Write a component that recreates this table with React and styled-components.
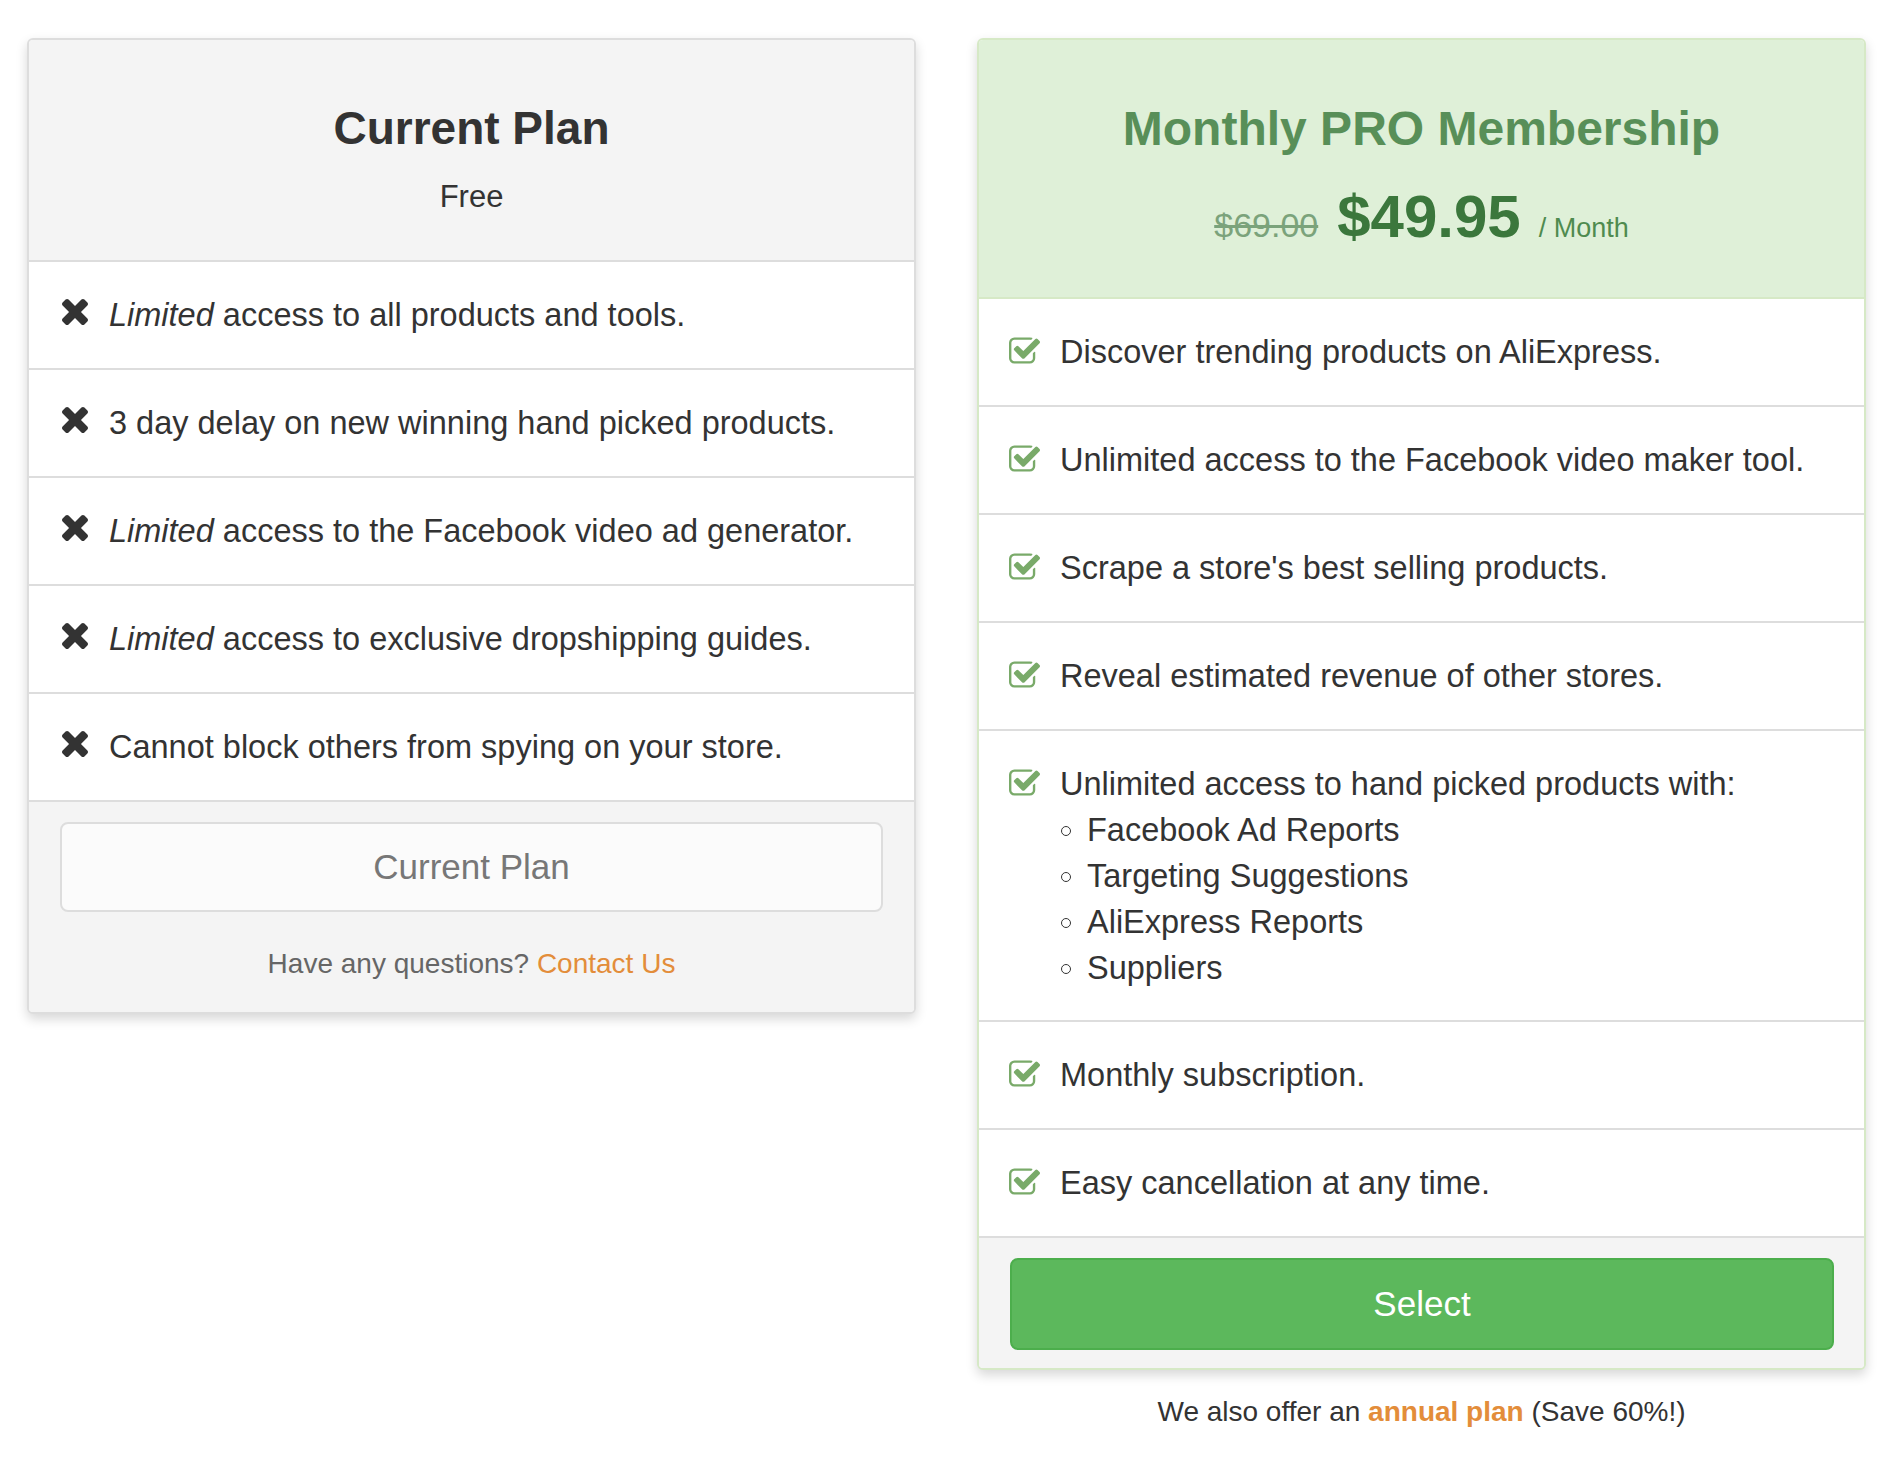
import React from "react";
import styled, { createGlobalStyle } from "styled-components";

const GlobalStyle = createGlobalStyle`
  body {
    margin: 0;
    background: #fff;
    color: #333;
    font-family: "Liberation Sans", Arial, Helvetica, sans-serif;
  }
`;

const Page = styled.div`
  display: grid;
  grid-template-columns: 1fr 1fr;
  column-gap: 61px;
  align-items: start;
  padding: 38px 30px 40px 27px;
`;

const Column = styled.div`
  display: flex;
  flex-direction: column;
`;

const Card = styled.div`
  border: 2px solid ${(p) => (p.$pro ? "#d6e9c6" : "#ddd")};
  border-radius: 6px;
  overflow: hidden;
  background: #fff;
  box-shadow: 0 5px 12px rgba(0, 0, 0, 0.16);
`;

const CardHeader = styled.div`
  background: ${(p) => (p.$pro ? "#dff0d8" : "#f4f4f4")};
  border-bottom: 2px solid ${(p) => (p.$pro ? "#d6e9c6" : "#ddd")};
  text-align: center;
  padding: ${(p) => (p.$pro ? "62px 20px 45px" : "62px 20px 43px")};
`;

const PlanTitle = styled.h2`
  margin: 0;
  font-size: ${(p) => (p.$pro ? 48 : 46)}px;
  line-height: ${(p) => (p.$pro ? 54 : 52)}px;
  font-weight: 700;
  color: ${(p) => (p.$pro ? "#588f58" : "#333")};
`;

const PlanSubtitle = styled.div`
  margin-top: 23px;
  font-size: 31px;
  line-height: 40px;
  color: #333;
`;

const PriceRow = styled.div`
  margin-top: 26px;
  line-height: 70px;
  height: 70px;
  color: #3c763d;
`;

const OldPrice = styled.span`
  font-size: 34px;
  color: #7ba37b;
  text-decoration: line-through;
  margin-right: 19px;
`;

const Price = styled.span`
  font-size: 60px;
  font-weight: 700;
  color: #3b773c;
  margin-right: 18px;
`;

const Period = styled.span`
  font-size: 27px;
  color: #4f8b4f;
`;

const FeatureList = styled.ul`
  list-style: none;
  margin: 0;
  padding: 0;
`;

const Feature = styled.li`
  display: flex;
  align-items: flex-start;
  gap: ${(p) => (p.$pro ? 20 : 21)}px;
  padding: 30px 20px 30px ${(p) => (p.$pro ? 30 : 33)}px;
  font-size: 32.5px;
  line-height: 46px;
  color: #333;

  & + & {
    border-top: 2px solid #ddd;
  }
`;

const IconBox = styled.span`
  flex: none;
  display: flex;
  width: ${(p) => p.$w}px;
  height: ${(p) => p.$h}px;
  margin-top: ${(p) => p.$top}px;

  svg {
    width: 100%;
    height: 100%;
  }
`;

const SubList = styled.ul`
  list-style: none;
  margin: 0 0 -1px;
  padding: 0 0 0 1px;
`;

const SubItem = styled.li`
  display: flex;
  align-items: center;
  gap: 16px;

  &::before {
    content: "";
    width: 8px;
    height: 8px;
    border: 1.5px solid #333;
    border-radius: 50%;
    margin-top: 2px;
  }
`;

const CardFooter = styled.div`
  background: #f4f4f4;
  border-top: 2px solid #ddd;
  padding: ${(p) => (p.$pro ? "20px 30px 18px 31px" : "20px 31px 28px")};
  text-align: center;
`;

const PlanButton = styled.button`
  display: block;
  width: 100%;
  height: ${(p) => (p.$primary ? 92 : 90)}px;
  border-radius: 8px;
  font-family: inherit;
  font-size: 35px;
  cursor: pointer;
  border: 2px solid ${(p) => (p.$primary ? "#4cae4c" : "#ddd")};
  background: ${(p) => (p.$primary ? "#5cb85c" : "#fbfbfb")};
  color: ${(p) => (p.$primary ? "#fff" : "#777")};
`;

const Questions = styled.div`
  margin-top: 32px;
  font-size: 28px;
  line-height: 40px;
  color: #666;
`;

const OrangeLink = styled.a`
  color: #e38d3a;
  text-decoration: none;
  font-weight: ${(p) => (p.$bold ? 700 : 400)};
`;

const OfferNote = styled.div`
  margin-top: 22px;
  text-align: center;
  font-size: 28px;
  line-height: 40px;
  color: #333;
`;

const TimesIcon = () => (
  <IconBox $w={26} $h={26} $top={7}>
    <svg viewBox="110 366 1188 1188" fill="#333">
      <path d="M1298 1322q0 40-28 68l-136 136q-28 28-68 28t-68-28l-294-294-294 294q-28 28-68 28t-68-28l-136-136q-28-28-28-68t28-68l294-294-294-294q-28-28-28-68t28-68l136-136q28-28 68-28t68 28l294 294 294-294q28-28 68-28t68 28l136 136q28 28 28 68t-28 68l-294 294 294 294q28 28 28 68z" />
    </svg>
  </IconBox>
);

const CheckIcon = () => (
  <IconBox $w={31} $h={27} $top={8}>
    <svg viewBox="64 128 1663 1408" fill="#79aa69">
      <path d="M1472 930v318q0 119-84.5 203.5t-203.5 84.5h-832q-119 0-203.5-84.5t-84.5-203.5v-832q0-119 84.5-203.5t203.5-84.5h832q63 0 117 25 15 7 18 23 3 17-9 29l-49 49q-10 10-23 10-3 0-9-2-23-6-45-6h-832q-66 0-113 47t-47 113v832q0 66 47 113t113 47h832q66 0 113-47t47-113v-254q0-13 9-22l64-64q10-10 23-10 6 0 12 3 20 8 20 29zm231-489l-814 814q-24 24-57 24t-57-24l-430-430q-24-24-24-57t24-57l110-110q24-24 57-24t57 24l263 263 647-647q24-24 57-24t57 24l110 110q24 24 24 57t-24 57z" />
    </svg>
  </IconBox>
);

const freeFeatures = [
  { limited: true, text: "access to all products and tools." },
  { text: "3 day delay on new winning hand picked products." },
  { limited: true, text: "access to the Facebook video ad generator." },
  { limited: true, text: "access to exclusive dropshipping guides." },
  { text: "Cannot block others from spying on your store." },
];

const proFeatures = [
  { text: "Discover trending products on AliExpress." },
  { text: "Unlimited access to the Facebook video maker tool." },
  { text: "Scrape a store's best selling products." },
  { text: "Reveal estimated revenue of other stores." },
  {
    text: "Unlimited access to hand picked products with:",
    sub: ["Facebook Ad Reports", "Targeting Suggestions", "AliExpress Reports", "Suppliers"],
  },
  { text: "Monthly subscription." },
  { text: "Easy cancellation at any time." },
];

export default function App() {
  return (
    <>
      <GlobalStyle />
      <Page>
        <Card>
          <CardHeader>
            <PlanTitle>Current Plan</PlanTitle>
            <PlanSubtitle>Free</PlanSubtitle>
          </CardHeader>
          <FeatureList>
            {freeFeatures.map((f) => (
              <Feature key={f.text}>
                <TimesIcon />
                <span>
                  {f.limited && (
                    <>
                      <em>Limited</em>{" "}
                    </>
                  )}
                  {f.text}
                </span>
              </Feature>
            ))}
          </FeatureList>
          <CardFooter>
            <PlanButton>Current Plan</PlanButton>
            <Questions>
              Have any questions? <OrangeLink href="#">Contact Us</OrangeLink>
            </Questions>
          </CardFooter>
        </Card>

        <Column>
          <Card $pro>
            <CardHeader $pro>
              <PlanTitle $pro>Monthly PRO Membership</PlanTitle>
              <PriceRow>
                <OldPrice>$69.00</OldPrice>
                <Price>$49.95</Price>
                <Period>/ Month</Period>
              </PriceRow>
            </CardHeader>
            <FeatureList>
              {proFeatures.map((f) => (
                <Feature key={f.text} $pro>
                  <CheckIcon />
                  <div>
                    {f.text}
                    {f.sub && (
                      <SubList>
                        {f.sub.map((s) => (
                          <SubItem key={s}>{s}</SubItem>
                        ))}
                      </SubList>
                    )}
                  </div>
                </Feature>
              ))}
            </FeatureList>
            <CardFooter $pro>
              <PlanButton $primary>Select</PlanButton>
            </CardFooter>
          </Card>
          <OfferNote>
            We also offer an <OrangeLink href="#" $bold>annual plan</OrangeLink> (Save 60%!)
          </OfferNote>
        </Column>
      </Page>
    </>
  );
}
